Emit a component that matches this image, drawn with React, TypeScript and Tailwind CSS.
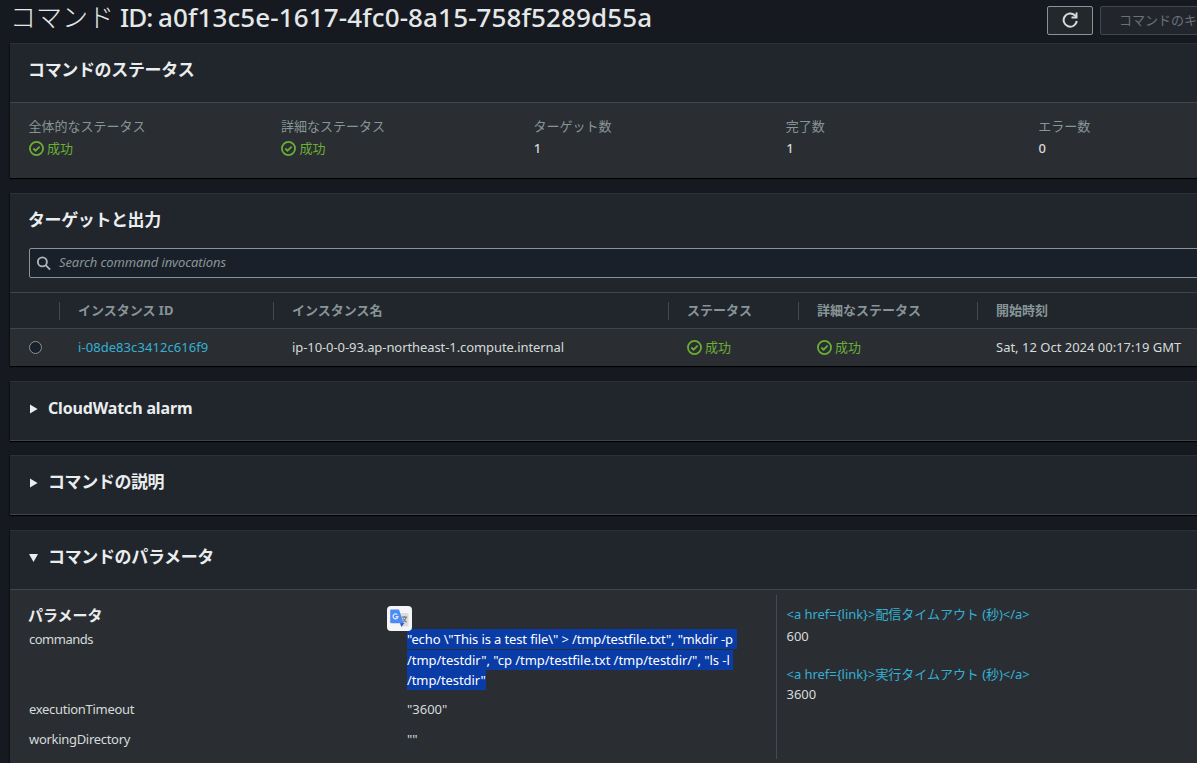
import type { ReactNode } from "react";

const COLUMNS = [
  { label: "", cell: "w-[49px]", divider: false },
  { label: "インスタンス ID", cell: "w-[214px]", divider: true },
  { label: "インスタンス名", cell: "w-[395px]", divider: true },
  { label: "ステータス", cell: "w-[130px]", divider: true },
  { label: "詳細なステータス", cell: "w-[179px]", divider: true },
  { label: "開始時刻", cell: "w-[240px]", divider: true },
];

const SUMMARY = [
  { label: "全体的なステータス", value: null },
  { label: "詳細なステータス", value: null },
  { label: "ターゲット数", value: "1" },
  { label: "完了数", value: "1" },
  { label: "エラー数", value: "0" },
];

function Success() {
  return (
    <span className="flex items-center gap-[3px] text-[#6aaf35] leading-5">
      <svg viewBox="0 0 16 16" className="w-[15px] h-[15px] mt-px" fill="none" stroke="currentColor" strokeWidth="1.9">
        <circle cx="8" cy="8" r="7" />
        <path d="M4.6 8l2.4 2.3 4.4-4.3" />
      </svg>
      <span>成功</span>
    </span>
  );
}

function Panel({ className, children }: { className: string; children: ReactNode }) {
  return (
    <section
      className={`shrink-0 border-t border-[#2e3236] bg-[#21252c] shadow-[0_1px_1px_0_#000,-1px_0_1px_0_#101317] ${className}`}
    >
      {children}
    </section>
  );
}

function Caret({ open }: { open?: boolean }) {
  return (
    <svg viewBox="0 0 10 10" className="w-[10px] h-[10px]" fill="#eaeded">
      {open ? <path d="M0 1h9L4.5 9z" /> : <path d="M1 0.5l7.6 4.5L1 9.5z" />}
    </svg>
  );
}

function Collapsed({ title, className }: { title: string; className: string }) {
  return (
    <div className="flex items-start gap-[9px] pl-[19px] pt-[14px]">
      <div className="pt-2">
        <Caret />
      </div>
      <h2 className={`leading-6 font-bold text-[#eaeded] ${className}`}>{title}</h2>
    </div>
  );
}

function TranslateBadge() {
  return (
    <span className="absolute left-[-20px] top-[-23px] w-[25px] h-[25px] rounded-[4px] bg-[#f5f5f5] flex items-center justify-center">
      <svg viewBox="0 0 19 19" className="w-[19px] h-[19px]">
        <path d="M8 4h9.5a1 1 0 0 1 1 1v11.5a1 1 0 0 1-1 1H12z" fill="#dcdcdc" />
        <path d="M10 14h4.5l-3.2 4z" fill="#3352c4" />
        <path d="M1 0.5h8l4.6 13.7H1.2a1 1 0 0 1-1-1V1.3a.8.8 0 0 1 .8-.8z" fill="#4c8bf5" />
        <path d="M7.2 5.6A2.4 2.4 0 1 0 7.9 7.6H5.6" fill="none" stroke="#dfeaff" strokeWidth="1.3" />
        <path
          d="M11.7 8.2h5.5M14.3 7v1.2M16 8.4c-.5 2.2-1.7 3.6-3 4.6M13 9.5c.7 1.6 2 2.9 3.6 3.8"
          fill="none"
          stroke="#6f7f88"
          strokeWidth="1.2"
        />
      </svg>
    </span>
  );
}

export default function App() {
  return (
    <div className="h-[763px] w-full overflow-hidden bg-[#161a20] text-[13px] text-[#d5dbdb] font-['Noto_Sans','Noto_Sans_CJK_JP',sans-serif] whitespace-nowrap">
      <div className="flex w-[1292px] flex-col pl-[10px]">
        {/* Page header */}
        <header className="flex h-[43px] items-start">
          <h1 className="-mt-px flex w-[1037px] text-[26px] leading-9 text-[#e4e8e8]">
            <span className="w-[110px] font-light">コマンド</span>
            <span className="w-[38px] font-medium tracking-[-1px]">ID:</span>
            <span className="font-medium tracking-[0.13px]">a0f13c5e-1617-4fc0-8a15-758f5289d55a</span>
          </h1>
          <button
            type="button"
            className="mt-[6px] mr-[7px] flex h-[29px] w-[46px] items-center justify-center rounded-[2px] border border-[#879596] bg-[#23282d]"
          >
            <svg viewBox="0 0 16 16" className="w-4 h-4 -mt-px -ml-px" fill="none" stroke="#d5dbdb" strokeWidth="2">
              <path d="M14.8 9A6.6 6.6 0 1 1 12.8 3.3L14.4 5" />
              <path d="M9.5 5.5h5V0.5" />
            </svg>
          </button>
          <button
            type="button"
            className="mt-[6px] h-[29px] w-[190px] rounded-[2px] border border-[#414750] bg-[#22262c] pl-[18px] text-left text-[#687078]"
          >
            コマンドのキャンセル
          </button>
        </header>

        {/* Status */}
        <Panel className="h-[135px]">
          <div className="h-[59px] border-b border-[#3f474f] pl-[18px] pt-[14px]">
            <h2 className="text-[17px] leading-6 font-bold tracking-[-0.35px] text-[#eaeded]">コマンドのステータス</h2>
          </div>
          <div className="flex h-[75px] bg-[#2a2e32] pl-[19px] pt-3">
            {SUMMARY.map(s => (
              <div key={s.label} className="w-[252.4px]">
                <div className="-ml-[0.4px] leading-[22px] text-[#879596]">{s.label}</div>
                {s.value === null ? (
                  <div className="pt-px">
                    <Success />
                  </div>
                ) : (
                  <div className="leading-[22px] font-medium">{s.value}</div>
                )}
              </div>
            ))}
          </div>
        </Panel>

        {/* Targets and outputs */}
        <Panel className="mt-[15px] h-[173px]">
          <div className="h-[99px] border-b border-[#3f444c] pl-[19px] pt-[14px]">
            <h2 className="-ml-px text-[17px] leading-6 font-bold tracking-[-0.4px] text-[#eaeded]">ターゲットと出力</h2>
            <div className="mt-4 flex h-[30px] items-center rounded-[2px] border border-[#879596] bg-[#1a2029] pl-[6px]">
              <svg viewBox="0 0 16 16" className="w-[15px] h-[15px]" fill="none" stroke="#aab7b8" strokeWidth="2">
                <circle cx="6.8" cy="6.3" r="4.8" />
                <path d="M10.3 9.8L15 14.5" />
              </svg>
              <span className="ml-[8px] italic tracking-[-0.1px] text-[#879596]">Search command invocations</span>
            </div>
          </div>
          <div className="flex h-9 items-center border-b border-[#3f444c]">
            {COLUMNS.map(c => (
              <div
                key={c.cell}
                className={`h-[18px] leading-[17px] font-bold text-[#879596] ${c.cell} ${c.divider ? "border-l border-[#434950] pl-[18px]" : ""}`}
              >
                {c.label}
              </div>
            ))}
          </div>
          <div className="flex h-[37px] items-center bg-[#2a2e32]">
            <div className="w-[68px] pl-[19px]">
              <span className="block h-[13px] w-[13px] rounded-full border border-[#879596] bg-[#1a2029]" />
            </div>
            <div className="w-[214px] tracking-[0.06px] text-[#35b0d3]">i-08de83c3412c616f9</div>
            <div className="w-[395px] tracking-[-0.08px]">ip-10-0-0-93.ap-northeast-1.compute.internal</div>
            <div className="w-[130px] pb-[2px]">
              <Success />
            </div>
            <div className="w-[179px] pb-[2px]">
              <Success />
            </div>
            <div>Sat, 12 Oct 2024 00:17:19 GMT</div>
          </div>
        </Panel>

        <Panel className="mt-[15px] h-[60px] border-b border-b-[#3f444c]">
          <Collapsed title="CloudWatch alarm" className="text-[16px] tracking-[-0.15px]" />
        </Panel>
        <Panel className="mt-[14px] h-[60px] border-b border-b-[#3f444c]">
          <Collapsed title="コマンドの説明" className="text-[17px] tracking-[-0.4px]" />
        </Panel>

        {/* Parameters */}
        <Panel className="mt-[15px] h-[240px]">
          <div className="flex h-[59px] items-start gap-[9px] border-b border-[#3f474f] pl-[19px] pt-[14px]">
            <div className="pt-2">
              <Caret open />
            </div>
            <h2 className="text-[17px] leading-6 font-bold tracking-[-0.35px] text-[#eaeded]">コマンドのパラメータ</h2>
          </div>
          <div className="flex h-[180px] bg-[#2a2e32] pl-[19px] pt-[5px]">
            <div className="w-[747px] h-[164px] pt-[9px]">
              <h3 className="-ml-px text-[15px] leading-[22px] font-bold text-[#eaeded]">パラメータ</h3>
              <div className="flex h-[71px] pt-[3px]">
                <div className="w-[378px] leading-5 tracking-[-0.5px]">commands</div>
                <div className="relative leading-[20.5px] text-white">
                  <span className="bg-[#0a3ca8] py-px pr-1 tracking-[-0.12px]">
                    "echo \"This is a test file\" &gt; /tmp/testfile.txt", "mkdir -p
                  </span>
                  <br />
                  <span className="bg-[#0a3ca8] py-px pr-[3px] tracking-[-0.04px]">
                    /tmp/testdir", "cp /tmp/testfile.txt /tmp/testdir/", "ls -l
                  </span>
                  <br />
                  <span className="bg-[#0a3ca8] py-px tracking-[-0.1px]">/tmp/testdir"</span>
                  <TranslateBadge />
                </div>
              </div>
              <div className="flex h-[30px] leading-6">
                <div className="w-[378px] tracking-[-0.3px]">executionTimeout</div>
                <div>"3600"</div>
              </div>
              <div className="flex h-[30px] leading-6">
                <div className="w-[378px] tracking-[-0.3px]">workingDirectory</div>
                <div>""</div>
              </div>
            </div>
            <div className="h-[164px] border-l border-[#434950] pl-[9.5px] pt-2 leading-[22px]">
              <div className="tracking-[-0.04px] text-[#35b0d3]">{"<a href={link}>配信タイムアウト (秒)</a>"}</div>
              <div>600</div>
              <div className="mt-4 tracking-[-0.04px] text-[#35b0d3]">{"<a href={link}>実行タイムアウト (秒)</a>"}</div>
              <div className="leading-[18px]">3600</div>
            </div>
          </div>
        </Panel>
      </div>
    </div>
  );
}
